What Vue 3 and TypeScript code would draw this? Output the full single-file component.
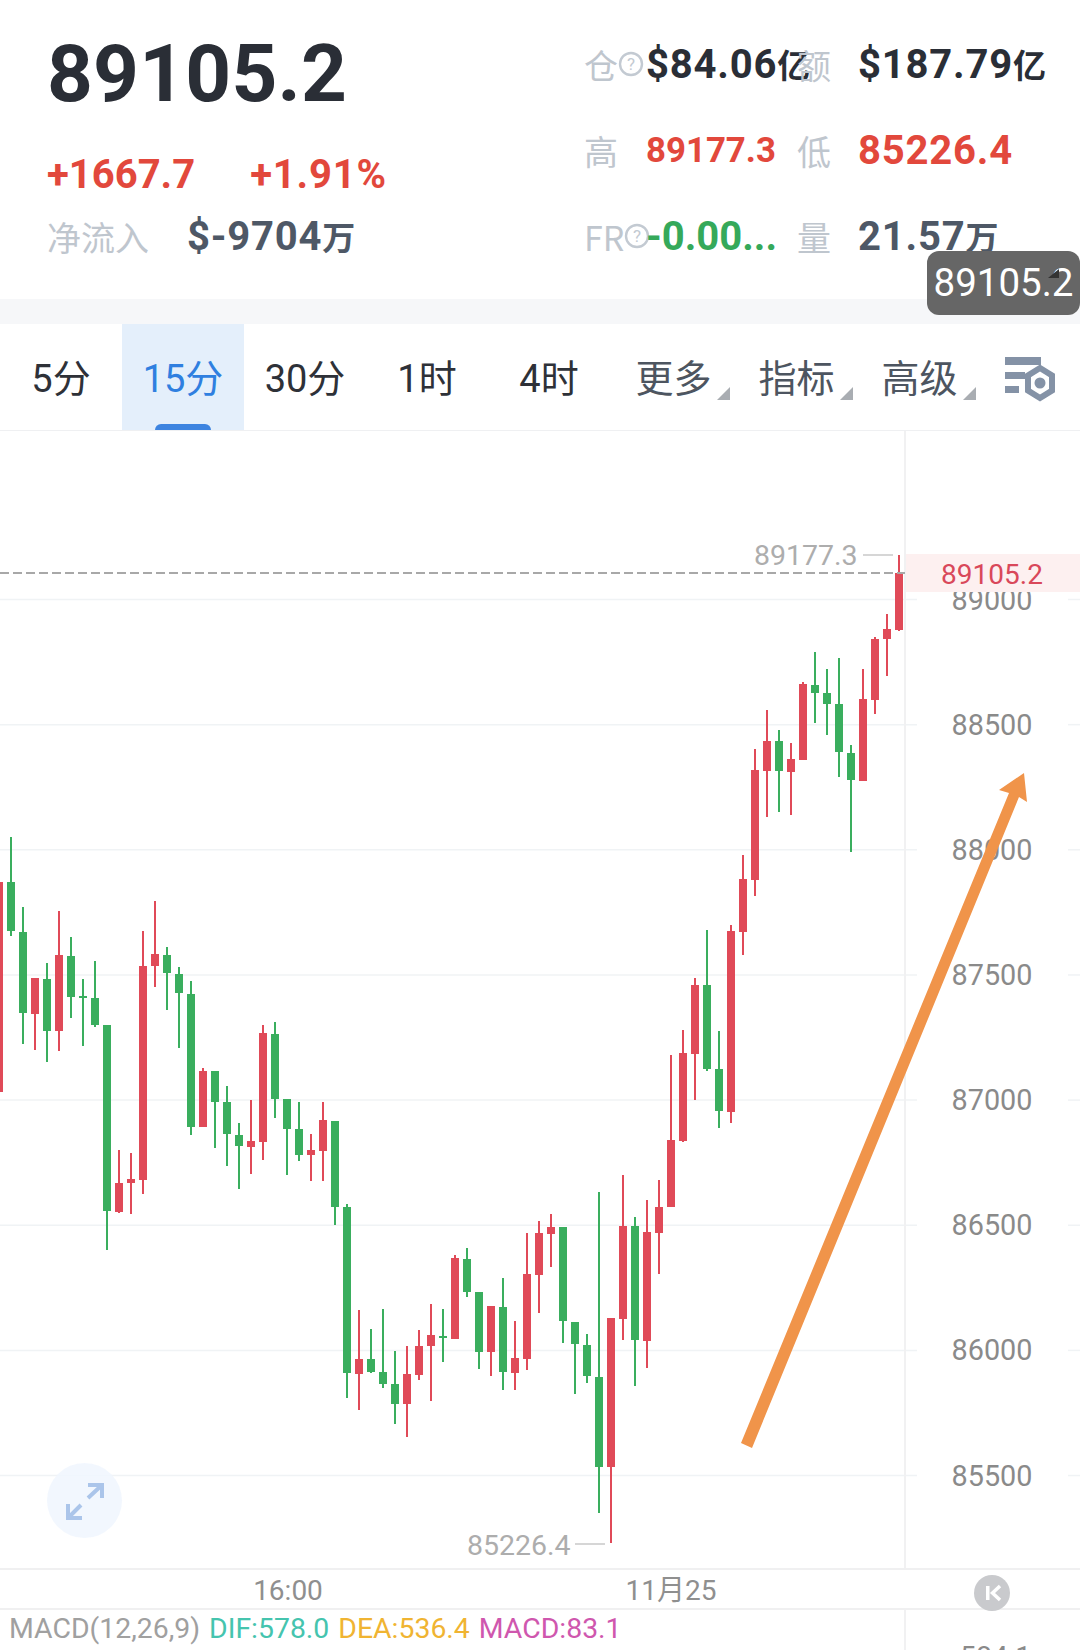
<template>
  <div class="page">
    <!-- 行情头部 -->
    <header class="quote">
      <div class="quote-main">
        <div class="last-price">89105.2</div>
        <div class="change-row">
          <span>+1667.7</span>
          <span class="percent">+1.91%</span>
        </div>
        <div class="flow-row">
          <span class="label">净流入</span>
          <span class="flow-value">$-9704<small>万</small></span>
        </div>
      </div>
      <div class="stats">
        <template v-for="item in stats" :key="item.label">
          <div class="label stat-label">
            {{ item.label }}
            <svg v-if="item.help" class="help" viewBox="0 0 26 26">
              <circle cx="13" cy="13" r="11" fill="none" stroke="#c3cad2" stroke-width="2.4" />
              <text x="13" y="18.5" text-anchor="middle" class="help-mark">?</text>
            </svg>
          </div>
          <div class="stat-value" :class="[item.tone, { tight: item.tight }]">
            {{ item.value }}<small v-if="item.unit">{{ item.unit }}</small>
          </div>
        </template>
      </div>
    </header>
    <div class="band"></div>
    <div class="price-tip">89105.2</div>

    <!-- 周期切换 -->
    <nav class="tabs">
      <button
        v-for="tab in tabs"
        :key="tab.label"
        class="tab"
        :class="{ active: tab.label === currentTab, menu: tab.menu }"
      >
        {{ tab.label }}
      </button>
      <svg class="setting" viewBox="0 0 54 46">
        <rect x="2" y="1" width="36" height="8" fill="#8492a6" />
        <rect x="2" y="16" width="20" height="7" fill="#8492a6" />
        <rect x="2" y="30" width="14" height="7" fill="#8492a6" />
        <polygon points="37,12 49,19.5 49,34.5 37,42 25,34.5 25,19.5" fill="#fff" stroke="#8492a6" stroke-width="6" />
        <circle cx="37" cy="27" r="5.5" fill="#8492a6" />
      </svg>
    </nav>

    <!-- K线图 -->
    <section class="chart">
      <svg class="plot" viewBox="0 431 1080 1137">
        <g v-for="y in gridYs" :key="y">
          <line x1="0" x2="917" :y1="y" :y2="y" stroke="#f0f3f5" stroke-width="1.5" />
          <line x1="1068" x2="1080" :y1="y" :y2="y" stroke="#f0f3f5" stroke-width="1.5" />
        </g>
        <line x1="905" x2="905" y1="431" y2="1568" stroke="#f1f1f2" stroke-width="2" />

        <g v-for="(c, i) in candles" :key="i" :fill="c[0] === 'r' ? '#e04a58' : '#3aae5e'">
          <rect :x="11 + 12 * (i - 1) - 1" :y="c[1]" width="2" :height="c[4] - c[1]" />
          <rect :x="11 + 12 * (i - 1) - 4" :y="c[2]" width="8" :height="Math.max(c[3] - c[2], 2)" />
        </g>

        <line x1="0" x2="905" y1="573" y2="573" stroke="#a8a8a8" stroke-width="2" stroke-dasharray="9 4" />

        <g v-for="tick in ticks" :key="tick.label">
          <text x="992" :y="tick.y + 10" text-anchor="middle" class="axis-text">{{ tick.label }}</text>
        </g>
        <rect x="906" y="554" width="174" height="38" fill="#fdf0f0" />
        <text x="992" y="584" text-anchor="middle" class="now-text">89105.2</text>

        <text x="754" y="565" class="mark-text">89177.3</text>
        <line x1="863" x2="893" y1="555" y2="555" stroke="#c9c9c9" stroke-width="1.5" />
        <text x="467" y="1555" class="mark-text">85226.4</text>
        <line x1="575" x2="605" y1="1544" y2="1544" stroke="#c9c9c9" stroke-width="1.5" />

        <polygon points="741,1443 1009,793 999,790 1024,773 1027,802 1019,797 752,1448" fill="#f0944a" />
      </svg>

      <button class="zoom-btn">
        <svg viewBox="0 0 75 75" width="75" height="75">
          <path d="M41 35 L55 22 M41 22 H55 V35 M34 42 L21 55 M21 41 V55 H35" fill="none" stroke="#abc5ea" stroke-width="4" />
        </svg>
      </button>
    </section>

    <!-- 时间轴 -->
    <div class="time-axis">
      <span class="time" style="left: 288px">16:00</span>
      <span class="time" style="left: 671px">11月25</span>
      <span class="back-btn">
        <svg viewBox="0 0 36 36" width="36" height="36">
          <rect x="12" y="11" width="3.5" height="14" fill="#fff" />
          <path d="M26 11 L18.5 18 L26 25" fill="none" stroke="#fff" stroke-width="3.5" />
        </svg>
      </span>
    </div>

    <!-- 副图指标 -->
    <div class="macd">
      <span class="macd-name">MACD(12,26,9)</span>
      <span class="dif">DIF:578.0</span>
      <span class="dea">DEA:536.4</span>
      <span class="bar">MACD:83.1</span>
      <span class="macd-axis">584.1</span>
    </div>
  </div>
</template>

<script setup lang="ts">
import { ref } from 'vue';

interface Stat {
  label: string;
  value: string;
  unit?: string;
  tone: string;
  help?: boolean;
  tight?: boolean;
}

type Candle = ['r' | 'g', number, number, number, number];

const stats: Stat[] = [
  { label: '仓', value: '$84.06', unit: '亿', tone: 'dark', help: true },
  { label: '额', value: '$187.79', unit: '亿', tone: 'dark' },
  { label: '高', value: '89177.3', tone: 'red', tight: true },
  { label: '低', value: '85226.4', tone: 'red' },
  { label: 'FR', value: '-0.00...', tone: 'green', help: true },
  { label: '量', value: '21.57', unit: '万', tone: 'slate' },
];

const tabs = [
  { label: '5分' },
  { label: '15分' },
  { label: '30分' },
  { label: '1时' },
  { label: '4时' },
  { label: '更多', menu: true },
  { label: '指标', menu: true },
  { label: '高级', menu: true },
];
const currentTab = ref('15分');

const ticks = [89000, 88500, 88000, 87500, 87000, 86500, 86000, 85500].map((v, i) => ({
  label: String(v),
  y: 599.5 + i * 125.15,
}));
const gridYs = ticks.map((t) => t.y);

// 颜色, 最高, 实体上沿, 实体下沿, 最低 (单位: 像素)
const candles: Candle[] = [
  ['r', 882, 882, 1092, 1092],
  ['g', 837, 882, 931, 936],
  ['g', 907, 932, 1013, 1044],
  ['r', 978, 978, 1014, 1050],
  ['g', 963, 979, 1031, 1062],
  ['r', 911, 955, 1031, 1051],
  ['g', 937, 956, 997, 1018],
  ['g', 979, 996, 998, 1046],
  ['g', 961, 998, 1025, 1027],
  ['g', 1025, 1025, 1211, 1250],
  ['r', 1150, 1183, 1212, 1213],
  ['r', 1153, 1179, 1183, 1214],
  ['r', 931, 966, 1180, 1194],
  ['r', 901, 954, 966, 987],
  ['g', 947, 955, 973, 1010],
  ['g', 967, 974, 993, 1048],
  ['g', 981, 994, 1127, 1135],
  ['r', 1068, 1071, 1127, 1127],
  ['g', 1071, 1071, 1102, 1148],
  ['g', 1086, 1102, 1134, 1166],
  ['g', 1123, 1135, 1146, 1189],
  ['r', 1100, 1141, 1147, 1174],
  ['r', 1025, 1033, 1142, 1160],
  ['g', 1022, 1034, 1099, 1118],
  ['g', 1099, 1099, 1129, 1175],
  ['g', 1102, 1129, 1155, 1161],
  ['r', 1134, 1150, 1155, 1181],
  ['r', 1102, 1120, 1151, 1181],
  ['g', 1121, 1121, 1207, 1225],
  ['g', 1204, 1207, 1373, 1398],
  ['r', 1310, 1359, 1374, 1410],
  ['g', 1329, 1359, 1372, 1373],
  ['g', 1309, 1372, 1384, 1388],
  ['g', 1351, 1384, 1404, 1424],
  ['r', 1346, 1374, 1404, 1437],
  ['r', 1330, 1346, 1375, 1380],
  ['r', 1304, 1335, 1346, 1401],
  ['g', 1309, 1336, 1338, 1362],
  ['r', 1255, 1258, 1339, 1339],
  ['g', 1248, 1259, 1292, 1297],
  ['g', 1292, 1292, 1352, 1369],
  ['r', 1306, 1306, 1352, 1376],
  ['g', 1278, 1307, 1372, 1390],
  ['r', 1321, 1358, 1373, 1390],
  ['r', 1233, 1274, 1359, 1370],
  ['r', 1221, 1233, 1275, 1313],
  ['r', 1214, 1227, 1234, 1267],
  ['g', 1227, 1227, 1321, 1343],
  ['g', 1322, 1322, 1344, 1394],
  ['g', 1334, 1345, 1376, 1383],
  ['g', 1192, 1377, 1467, 1513],
  ['r', 1318, 1318, 1467, 1543],
  ['r', 1175, 1226, 1319, 1340],
  ['g', 1217, 1226, 1340, 1386],
  ['r', 1200, 1232, 1341, 1368],
  ['r', 1180, 1207, 1233, 1274],
  ['r', 1055, 1140, 1207, 1207],
  ['r', 1030, 1053, 1141, 1142],
  ['r', 978, 985, 1054, 1100],
  ['g', 930, 985, 1069, 1071],
  ['g', 1031, 1069, 1111, 1128],
  ['r', 925, 931, 1112, 1123],
  ['r', 855, 879, 932, 955],
  ['r', 749, 770, 880, 896],
  ['r', 710, 741, 771, 817],
  ['g', 730, 741, 771, 812],
  ['r', 743, 759, 772, 815],
  ['r', 682, 684, 760, 760],
  ['g', 652, 685, 693, 723],
  ['g', 669, 693, 704, 735],
  ['g', 658, 704, 752, 777],
  ['g', 745, 753, 780, 852],
  ['r', 669, 699, 781, 781],
  ['r', 637, 639, 700, 714],
  ['r', 614, 629, 639, 676],
  ['r', 555, 573, 630, 631],
];
</script>

<style>
body {
  margin: 0;
  background: #fff;
}
</style>

<style scoped>
.page {
  position: relative;
  width: 1080px;
  height: 1650px;
  overflow: hidden;
  background: #fff;
  font-family: Roboto, "Noto Sans CJK SC", sans-serif;
}

.quote {
  display: flex;
  height: 299px;
}

.quote-main {
  width: 584px;
  padding: 23px 0 0 47px;
  box-sizing: border-box;
}

.last-price {
  font-size: 80px;
  font-weight: 700;
  letter-spacing: 0.2px;
  line-height: 102px;
  color: #2a2e36;
}

.change-row {
  display: flex;
  gap: 55px;
  margin-top: 27px;
  font-size: 40px;
  font-weight: 700;
  line-height: 46px;
  color: #e2483c;
}

.percent {
  letter-spacing: 0.8px;
}

.flow-row {
  display: flex;
  align-items: center;
  gap: 38px;
  margin-top: 15px;
  line-height: 46px;
}

.label {
  font-family: "Noto Sans CJK SC", sans-serif;
  font-size: 34px;
  color: #bfc6ce;
}

.flow-value {
  font-size: 40px;
  font-weight: 700;
  letter-spacing: 0.8px;
  color: #4e5866;
}

.flow-value small {
  font-size: 33px;
  font-family: "Noto Sans CJK SC", sans-serif;
}

.stats {
  display: grid;
  grid-template-columns: 62px 151px 61px 1fr;
  grid-auto-rows: 86px;
  padding-top: 21px;
  align-items: center;
}

.stat-label {
  display: flex;
  align-items: center;
  white-space: nowrap;
  width: 66px;
}

.help {
  flex: none;
  width: 26px;
  height: 26px;
}

.help-mark {
  font-size: 17px;
  font-family: Roboto, sans-serif;
  fill: #c3cad2;
}

.stat-value {
  font-size: 40px;
  font-weight: 700;
  letter-spacing: 0.8px;
  white-space: nowrap;
}

.stat-value small {
  font-size: 33px;
  font-family: "Noto Sans CJK SC", sans-serif;
  letter-spacing: 0;
}

.stat-value.tight {
  font-size: 34.8px;
  letter-spacing: 0;
}

.dark {
  color: #2a2e36;
}

.red {
  color: #e2483c;
}

.stat-value.green {
  color: #35a95a;
  letter-spacing: 0;
}

.slate {
  color: #4e5866;
}

.band {
  height: 25px;
  background: #f6f7f9;
}

.price-tip {
  position: absolute;
  top: 251px;
  left: 927px;
  width: 153px;
  height: 64px;
  border-radius: 12px;
  background: #666;
  color: #fff;
  font-size: 38.5px;
  line-height: 64px;
  text-align: center;
}

.price-tip::before {
  content: "";
  position: absolute;
  left: 121px;
  top: 18px;
  border-style: solid;
  border-width: 0 0 9px 11px;
  border-color: transparent transparent #333 transparent;
}

.tabs {
  position: relative;
  display: flex;
  height: 107px;
  border-bottom: 1px solid #eff0f2;
  box-sizing: border-box;
}

.tab {
  position: relative;
  flex: none;
  width: 122px;
  padding: 0 0 4px;
  border: 0;
  background: none;
  font-family: Roboto, "Noto Sans CJK SC", sans-serif;
  font-size: 38px;
  color: #2e3138;
}

.tab.active {
  background: #e4effb;
  color: #2f7fe0;
}

.tab.active::after {
  content: "";
  position: absolute;
  left: 33px;
  bottom: 0;
  width: 56px;
  height: 6px;
  border-radius: 6px 6px 0 0;
  background: #3d84e0;
}

.tab.menu {
  width: 123px;
  padding-left: 4px;
  color: #4d5560;
}

.tab.menu::after {
  content: "";
  position: absolute;
  left: 107px;
  bottom: 30px;
  border-style: solid;
  border-width: 0 0 13px 13px;
  border-color: transparent transparent #a9adb2 transparent;
}

.setting {
  width: 54px;
  height: 46px;
  margin: 32px 0 0 24px;
}

.chart {
  position: relative;
  height: 1137px;
}

.plot {
  display: block;
  width: 1080px;
  height: 1137px;
}

.axis-text {
  font-size: 28.8px;
  fill: #8a8a8a;
}

.now-text {
  font-size: 28px;
  fill: #d9485a;
}

.mark-text {
  font-size: 28.5px;
  fill: #adadad;
}

.zoom-btn {
  position: absolute;
  left: 47px;
  top: 1032px;
  width: 75px;
  height: 75px;
  padding: 0;
  border: 0;
  border-radius: 50%;
  background: rgba(240, 246, 254, 0.85);
}

.zoom-btn svg {
  display: block;
}

.time-axis {
  position: relative;
  height: 38px;
  border-top: 2px solid #f0f0f1;
  border-bottom: 2px solid #f0f0f1;
  color: #8f8f8f;
  font-size: 28px;
  line-height: 42px;
}

.time {
  position: absolute;
  top: 0;
  transform: translateX(-50%);
  font-family: Roboto, "Noto Sans CJK SC", sans-serif;
}

.back-btn {
  position: absolute;
  left: 974px;
  top: 5px;
  width: 36px;
  height: 36px;
  border-radius: 50%;
  background: #c9cacd;
}

.back-btn svg {
  display: block;
}

.macd {
  position: relative;
  display: flex;
  gap: 9px;
  height: 40px;
  padding-left: 9px;
  font-size: 28.4px;
  line-height: 38px;
}

.macd::before {
  content: "";
  position: absolute;
  left: 904px;
  top: 0;
  bottom: 0;
  width: 2px;
  background: #f1f1f2;
}

.macd-name {
  color: #a0a0a0;
}

.dif {
  color: #45c4ae;
}

.dea {
  color: #f0b432;
}

.bar {
  color: #cf57ae;
}

.macd-axis {
  position: absolute;
  left: 960px;
  top: 28px;
  color: #8a8a8a;
}
</style>
